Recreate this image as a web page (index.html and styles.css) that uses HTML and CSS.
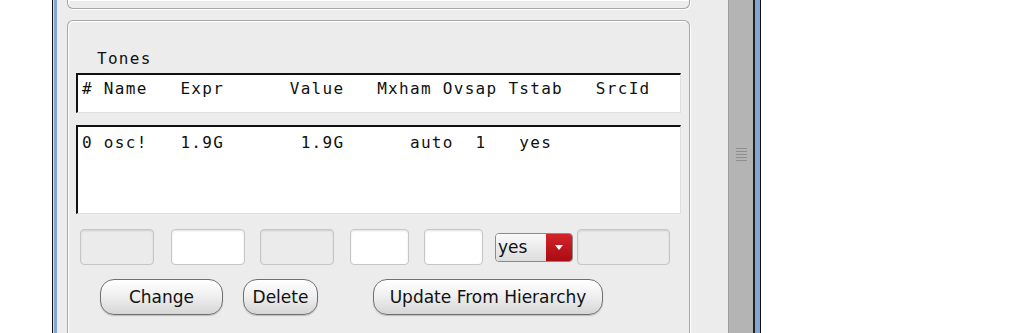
FILE: index.html
```html
<!DOCTYPE html>
<html lang="en">
<head>
    <meta charset="UTF-8">
    <title>Tones</title>
    <link rel="stylesheet" href="styles.css">
</head>
<body>
    <div class="window">
        <div class="frame-left"></div>

        <div class="pane">
            <div class="group group-top"></div>

            <div class="group group-tones">
                <div class="group-label">Tones</div>

                <div class="list list-head">
                    <div class="list-line"># Name   Expr      Value   Mxham Ovsap Tstab   SrcId</div>
                </div>

                <div class="list list-body">
                    <div class="list-line">0 osc!   1.9G       1.9G      auto  1   yes</div>
                </div>

                <div class="fields">
                    <input class="field field-wide" disabled>
                    <input class="field field-wide field-name">
                    <input class="field field-wide" disabled>
                    <input class="field field-narrow field-mxham">
                    <input class="field field-narrow">
                    <div class="select">
                        <span class="select-value">yes</span>
                        <span class="select-arrow"></span>
                    </div>
                    <input class="field field-src" disabled>
                </div>

                <div class="buttons">
                    <button class="btn btn-change">Change</button>
                    <button class="btn btn-delete">Delete</button>
                    <button class="btn btn-update">Update From Hierarchy</button>
                </div>
            </div>
        </div>

        <div class="scrollbar">
            <div class="grip"></div>
        </div>

        <div class="frame-right"></div>
    </div>
</body>
</html>
```

FILE: styles.css
```css
/* General Styling */
body {
    margin: 0;
    padding: 0;
    background-color: #fff;
    font-family: "DejaVu Sans", sans-serif;
    color: #111;
}

/* Window frame */
.window {
    display: flex;
    box-sizing: border-box;
    width: 709px;
    height: 333px;
    margin-left: 52px;
    border-left: 1px solid #111;
    border-right: 1px solid #111;
    overflow: hidden;
}

.frame-left {
    box-sizing: border-box;
    width: 4px;
    border-left: 1px solid #d4deee;
    background-color: #86a4d4;
}

.frame-right {
    width: 5px;
    background-color: #86a4d4;
}

.pane {
    box-sizing: border-box;
    width: 672px;
    padding-left: 10px;
    background-color: #ececec;
    border-right: 1px solid #9c9c9c;
    overflow: hidden;
}

.scrollbar {
    box-sizing: border-box;
    width: 26px;
    background-color: #b4b4b4;
    border-right: 2px solid #222;
}

.grip {
    width: 11px;
    height: 14px;
    margin: 148px 0 0 7px;
    background: repeating-linear-gradient(#8e8e8e 0 1px, transparent 1px 3px);
}

/* Group boxes */
.group {
    box-sizing: border-box;
    width: 623px;
    border: 1px solid #a6a6a6;
    box-shadow: inset 1px 1px 0 #fff, 1px 1px 0 #fff;
}

.group-top {
    height: 9px;
    border-top: none;
    border-radius: 0 0 6px 6px;
}

.group-tones {
    height: 330px;
    margin-top: 11px;
    padding: 29px 8px 0;
    border-bottom: none;
    border-radius: 6px 6px 0 0;
}

.group-label,
.list-line {
    font-family: "DejaVu Sans Mono", monospace;
    font-size: 16px;
    line-height: 18px;
    letter-spacing: 1.3px;
    white-space: pre;
}

.group-label {
    padding-left: 21px;
    margin-bottom: 5px;
}

/* Lists */
.list {
    box-sizing: border-box;
    background-color: #fff;
    border-top: 2px solid #111;
    border-left: 2px solid #111;
    border-right: 1px solid #dedede;
    border-bottom: 1px solid #dedede;
    padding-left: 4px;
}

.list-head {
    height: 40px;
    padding-top: 5px;
}

.list-body {
    height: 89px;
    margin-top: 12px;
    padding-top: 7px;
}

/* Entry fields */
.fields {
    display: flex;
    align-items: center;
    gap: 15px;
    margin: 15px 0 0 4px;
}

.field {
    box-sizing: border-box;
    height: 36px;
    margin: 0;
    padding: 0;
    border: 1px solid #c6c6c6;
    border-radius: 4px;
    background-color: #fff;
    box-shadow: inset 0 1px 2px rgba(0, 0, 0, 0.12);
}

.field:disabled {
    background-color: #ebebeb;
}

.field-wide {
    width: 74px;
}

.field-narrow {
    width: 59px;
}

.field-name {
    margin-left: 2px;
}

.field-mxham {
    margin-left: 1px;
}

.field-src {
    width: 93px;
    margin-left: -11px;
}

.select {
    display: flex;
    box-sizing: border-box;
    width: 78px;
    height: 29px;
    margin-left: -3px;
    border: 1px solid #8a8a8a;
    border-radius: 4px;
    overflow: hidden;
}

.select-value {
    flex: 1;
    padding-left: 2px;
    font-size: 17px;
    line-height: 27px;
    background: linear-gradient(#fafafa, #dcdcdc);
}

.select-arrow {
    position: relative;
    width: 26px;
    background: linear-gradient(#d4242a, #a80c12);
}

.select-arrow::after {
    content: "";
    position: absolute;
    left: 9px;
    top: 11px;
    border-left: 4px solid transparent;
    border-right: 4px solid transparent;
    border-top: 5px solid #fff;
}

/* Buttons */
.buttons {
    display: flex;
    margin: 14px 0 0 24px;
}

.btn {
    box-sizing: border-box;
    height: 36px;
    padding: 0;
    font-family: "DejaVu Sans", sans-serif;
    font-size: 17px;
    color: #111;
    border: 1px solid #707070;
    border-radius: 14px;
    background: linear-gradient(#ffffff, #f0f0f0 45%, #d6d6d6);
    box-shadow: 0 1px 1px rgba(0, 0, 0, 0.2);
}

.btn-change {
    width: 123px;
}

.btn-delete {
    width: 75px;
    margin-left: 20px;
}

.btn-update {
    width: 230px;
    margin-left: 55px;
}
```
